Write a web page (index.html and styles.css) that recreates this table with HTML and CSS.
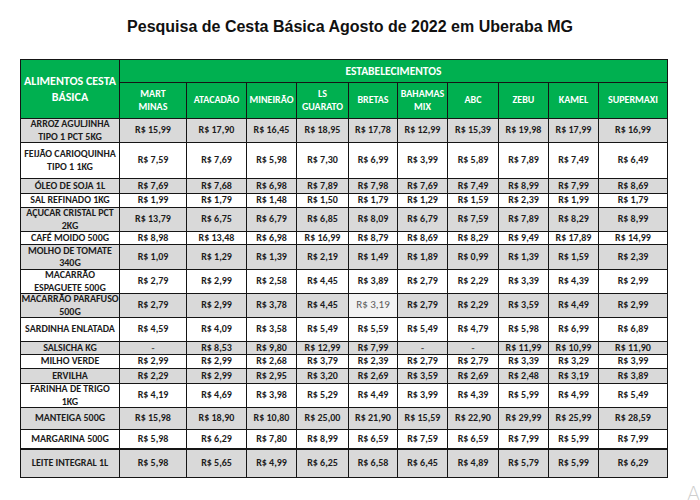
FILE: index.html
```html
<!DOCTYPE html>
<html lang="pt-BR">
<head>
<meta charset="utf-8">
<title>Pesquisa de Cesta Básica Agosto de 2022 em Uberaba MG</title>
<link rel="stylesheet" href="styles.css">
</head>
<body>
<h1 class="title">Pesquisa de Cesta Básica Agosto de 2022 em Uberaba MG</h1>
<div class="sheet">
  <div class="hd corner">ALIMENTOS CESTA<br>BÁSICA</div>
  <div class="hd group">ESTABELECIMENTOS</div>
  <div class="hd col">MART<br>MINAS</div>
  <div class="hd col">ATACADÃO</div>
  <div class="hd col">MINEIRÃO</div>
  <div class="hd col">LS<br>GUARATO</div>
  <div class="hd col">BRETAS</div>
  <div class="hd col">BAHAMAS<br>MIX</div>
  <div class="hd col">ABC</div>
  <div class="hd col">ZEBU</div>
  <div class="hd col">KAMEL</div>
  <div class="hd col">SUPERMAXI</div>

  <div class="row grey"><div class="lbl">ARROZ AGULJINHA<br>TIPO 1 PCT 5KG</div><div>R$ 15,99</div><div>R$ 17,90</div><div>R$ 16,45</div><div>R$ 18,95</div><div>R$ 17,78</div><div>R$ 12,99</div><div>R$ 15,39</div><div>R$ 19,98</div><div>R$ 17,99</div><div>R$ 16,99</div></div>
  <div class="row"><div class="lbl">FEIJÃO CARIOQUINHA<br>TIPO 1 1KG</div><div>R$ 7,59</div><div>R$ 7,69</div><div>R$ 5,98</div><div>R$ 7,30</div><div>R$ 6,99</div><div>R$ 3,99</div><div>R$ 5,89</div><div>R$ 7,89</div><div>R$ 7,49</div><div>R$ 6,49</div></div>
  <div class="row grey"><div class="lbl">ÓLEO DE SOJA 1L</div><div>R$ 7,69</div><div>R$ 7,68</div><div>R$ 6,98</div><div>R$ 7,89</div><div>R$ 7,98</div><div>R$ 7,69</div><div>R$ 7,49</div><div>R$ 8,99</div><div>R$ 7,99</div><div>R$ 8,69</div></div>
  <div class="row"><div class="lbl">SAL REFINADO 1KG</div><div>R$ 1,99</div><div>R$ 1,79</div><div>R$ 1,48</div><div>R$ 1,50</div><div>R$ 1,79</div><div>R$ 1,29</div><div>R$ 1,59</div><div>R$ 2,39</div><div>R$ 1,99</div><div>R$ 1,79</div></div>
  <div class="row grey"><div class="lbl">AÇUCAR CRISTAL PCT<br>2KG</div><div>R$ 13,79</div><div>R$ 6,75</div><div>R$ 6,79</div><div>R$ 6,85</div><div>R$ 8,09</div><div>R$ 6,79</div><div>R$ 7,59</div><div>R$ 7,89</div><div>R$ 8,29</div><div>R$ 8,99</div></div>
  <div class="row"><div class="lbl">CAFÉ MOIDO 500G</div><div>R$ 8,98</div><div>R$ 13,48</div><div>R$ 6,98</div><div>R$ 16,99</div><div>R$ 8,79</div><div>R$ 8,69</div><div>R$ 8,29</div><div>R$ 9,49</div><div>R$ 17,89</div><div>R$ 14,99</div></div>
  <div class="row grey"><div class="lbl">MOLHO DE TOMATE<br>340G</div><div>R$ 1,09</div><div>R$ 1,29</div><div>R$ 1,39</div><div>R$ 2,19</div><div>R$ 1,49</div><div>R$ 1,89</div><div>R$ 0,99</div><div>R$ 1,39</div><div>R$ 1,59</div><div>R$ 2,39</div></div>
  <div class="row"><div class="lbl">MACARRÃO<br>ESPAGUETE 500G</div><div>R$ 2,79</div><div>R$ 2,99</div><div>R$ 2,58</div><div>R$ 4,45</div><div>R$ 3,89</div><div>R$ 2,79</div><div>R$ 2,29</div><div>R$ 3,39</div><div>R$ 4,39</div><div>R$ 2,99</div></div>
  <div class="row grey"><div class="lbl">MACARRÃO PARAFUSO<br>500G</div><div>R$ 2,79</div><div>R$ 2,99</div><div>R$ 3,78</div><div>R$ 4,45</div><div class="odd">R$ 3,19</div><div>R$ 2,79</div><div>R$ 2,29</div><div>R$ 3,59</div><div>R$ 4,49</div><div>R$ 2,99</div></div>
  <div class="row"><div class="lbl">SARDINHA ENLATADA</div><div>R$ 4,59</div><div>R$ 4,09</div><div>R$ 3,58</div><div>R$ 5,49</div><div>R$ 5,59</div><div>R$ 5,49</div><div>R$ 4,79</div><div>R$ 5,98</div><div>R$ 6,99</div><div>R$ 6,89</div></div>
  <div class="row grey"><div class="lbl">SALSICHA KG</div><div class="dash">-</div><div>R$ 8,53</div><div>R$ 9,80</div><div>R$ 12,99</div><div>R$ 7,99</div><div class="dash">-</div><div class="dash">-</div><div>R$ 11,99</div><div>R$ 10,99</div><div>R$ 11,90</div></div>
  <div class="row"><div class="lbl">MILHO VERDE</div><div>R$ 2,99</div><div>R$ 2,99</div><div>R$ 2,68</div><div>R$ 3,79</div><div>R$ 2,39</div><div>R$ 2,79</div><div>R$ 2,79</div><div>R$ 3,39</div><div>R$ 3,29</div><div>R$ 3,99</div></div>
  <div class="row grey"><div class="lbl">ERVILHA</div><div>R$ 2,29</div><div>R$ 2,99</div><div>R$ 2,95</div><div>R$ 3,20</div><div>R$ 2,69</div><div>R$ 3,59</div><div>R$ 2,69</div><div>R$ 2,48</div><div>R$ 3,19</div><div>R$ 3,89</div></div>
  <div class="row"><div class="lbl">FARINHA DE TRIGO<br>1KG</div><div>R$ 4,19</div><div>R$ 4,69</div><div>R$ 3,98</div><div>R$ 5,29</div><div>R$ 4,49</div><div>R$ 3,99</div><div>R$ 4,39</div><div>R$ 5,99</div><div>R$ 4,99</div><div>R$ 5,49</div></div>
  <div class="row grey"><div class="lbl">MANTEIGA 500G</div><div>R$ 15,98</div><div>R$ 18,90</div><div>R$ 10,80</div><div>R$ 25,00</div><div>R$ 21,90</div><div>R$ 15,59</div><div>R$ 22,90</div><div>R$ 29,99</div><div>R$ 25,99</div><div>R$ 28,59</div></div>
  <div class="row"><div class="lbl">MARGARINA 500G</div><div>R$ 5,98</div><div>R$ 6,29</div><div>R$ 7,80</div><div>R$ 8,99</div><div>R$ 6,59</div><div>R$ 7,59</div><div>R$ 6,59</div><div>R$ 7,99</div><div>R$ 5,99</div><div>R$ 7,99</div></div>
  <div class="row grey thick"><div class="lbl">LEITE INTEGRAL 1L</div><div>R$ 5,98</div><div>R$ 5,65</div><div>R$ 4,99</div><div>R$ 6,25</div><div>R$ 6,58</div><div>R$ 6,45</div><div>R$ 4,89</div><div>R$ 5,79</div><div>R$ 5,99</div><div>R$ 6,29</div></div>
</div>
<span class="mark">A</span>
</body>
</html>
```

FILE: styles.css
```css
html, body {
  margin: 0;
  padding: 0;
  background: #ffffff;
}
body {
  position: relative;
  width: 700px;
  height: 500px;
  overflow: hidden;
  font-family: Carlito, "Open Sans", "DejaVu Sans", sans-serif;
}
.title {
  margin: 17px 0 0 0;
  height: 42px;
  line-height: 20px;
  text-align: center;
  font-family: "Liberation Sans", Arial, sans-serif;
  font-size: 16px;
  font-weight: 700;
  color: #111111;
}
.sheet {
  display: grid;
  grid-template-columns: 98px 66px 59px 49px 51px 48px 49px 50px 49px 49px 68px;
  grid-template-rows: 22px 35px 23px 35px 14px 13px 23px 12px 24px 23px 23px 23px 12px 13px 14px 23px 21px 18px 28px;
  gap: 1px;
  padding: 1px;
  width: max-content;
  margin-left: 20px;
  background: #151515;
}
.sheet > .row {
  display: contents;
}
.hd,
.row > div {
  display: flex;
  align-items: center;
  justify-content: center;
  text-align: center;
  overflow: hidden;
  background: #ffffff;
  color: #1c1c1c;
  font-size: 10px;
  font-weight: 700;
  line-height: 12.5px;
  white-space: nowrap;
}
.row.grey > div {
  background: #d9d9d9;
}
.row.thick > div {
  box-shadow: inset 0 1px 0 #151515;
}
.row > .odd,
.row.grey > .odd {
  background: #f2f2f2;
  color: #5a5a5a;
  font-weight: 400;
  font-size: 11px;
}
.row > .dash {
  color: #555555;
}
.sheet > .hd {
  background: #00b050;
  color: #ffffff;
}
.sheet > .corner {
  grid-row: 1 / span 2;
  font-size: 12px;
  line-height: 16px;
}
.sheet > .group {
  grid-column: 2 / span 10;
  font-size: 11.5px;
}
.sheet > .col {
  font-size: 10px;
  line-height: 12.5px;
}
.mark {
  position: absolute;
  left: 687px;
  top: 483px;
  font-family: "DejaVu Sans", sans-serif;
  font-weight: 300;
  font-size: 19px;
  color: #cfcfcf;
  line-height: 20px;
}
```
